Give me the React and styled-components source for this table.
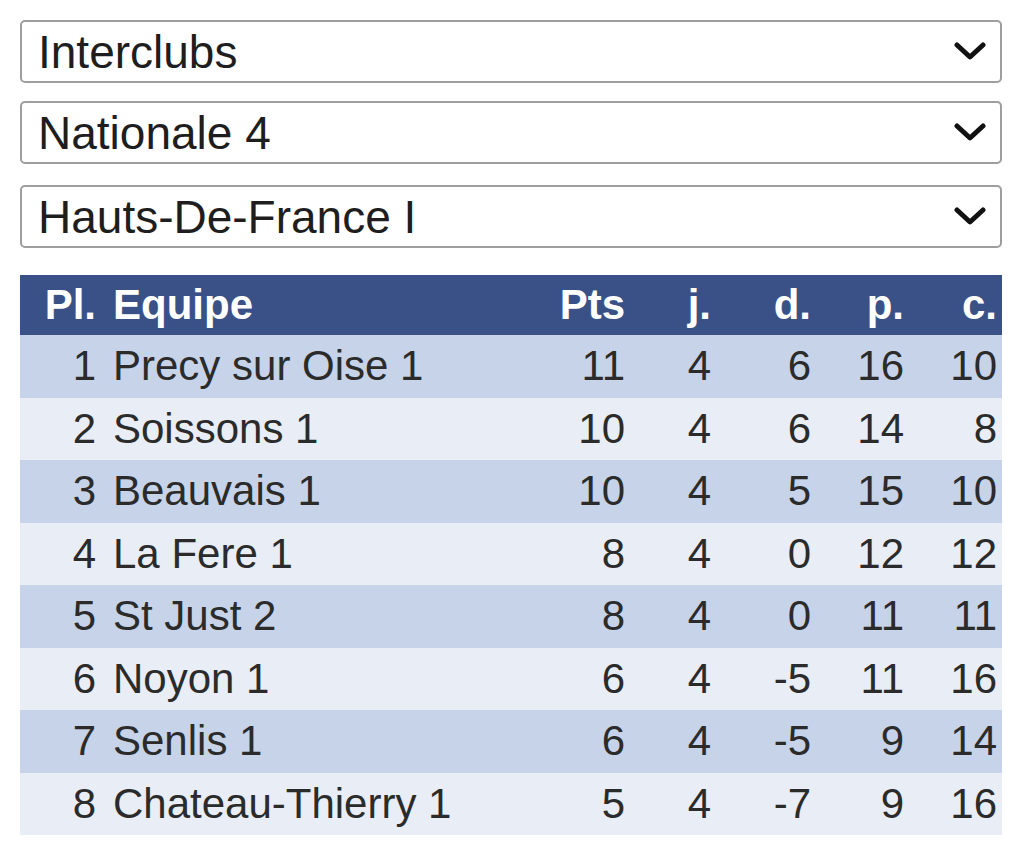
import styled, { createGlobalStyle } from 'styled-components';

const GlobalStyle = createGlobalStyle`
  body {
    margin: 0;
    background: #fff;
    font-family: "Liberation Sans", Arial, sans-serif;
  }
`

const Page = styled.div`
  padding: 20px 22px 20px 20px;
  width: 982px;
  display: flex;
  flex-direction: column;
`

const SelectWrap = styled.div`
  position: relative;
  height: 63px;
  margin-bottom: ${({gap})=>gap}px;
`

const Select = styled.select`
  appearance: none;
  -webkit-appearance: none;
  width: 100%;
  height: 100%;
  box-sizing: border-box;
  border: 2.5px solid #9e9e9e;
  border-radius: 5px;
  background: #fff;
  padding: 0 60px 0 16px;
  font-family: "Liberation Sans", Arial, sans-serif;
  font-size: 46px;
  color: #1e1e1e;
  outline: none;
`

const Chevron = styled.svg`
  position: absolute;
  right: 16px;
  top: 22px;
  width: 32px;
  height: 20px;
  pointer-events: none;
`

const Table = styled.table`
  width: 982px;
  table-layout: fixed;
  border-collapse: collapse;
  border-spacing: 0;
  font-family: "Liberation Sans", Arial, sans-serif;
`

const HeadRow = styled.tr`
  background: #3a5188;
  height: 60px;
`

const Th = styled.th`
  color: #fff;
  font-size: 42px;
  font-weight: bold;
  text-align: ${({left})=>left?'left':'right'};
  padding: ${({left})=>left?'0 0 0 13px':'0 5px 0 0'};
  vertical-align: middle;
  white-space: nowrap;
`

const Row = styled.tr`
  background: ${({alt})=>alt?'#e9edf6':'#c6d3e9'};
  height: 62.5px;
`

const Td = styled.td`
  color: #2b2b2b;
  font-size: 42px;
  text-align: ${({left})=>left?'left':'right'};
  padding: ${({left})=>left?'0 0 0 13px':'0 5px 0 0'};
  vertical-align: middle;
  white-space: nowrap;
`

const selects = [
  {value:'Interclubs', gap:18},
  {value:'Nationale 4', gap:21},
  {value:'Hauts-De-France I', gap:27},
]

const cols = [80, 450, 80, 86, 100, 93, 93]

const teams = [
  [1,'Precy sur Oise 1',11,4,6,16,10],
  [2,'Soissons 1',10,4,6,14,8],
  [3,'Beauvais 1',10,4,5,15,10],
  [4,'La Fere 1',8,4,0,12,12],
  [5,'St Just 2',8,4,0,11,11],
  [6,'Noyon 1',6,4,-5,11,16],
  [7,'Senlis 1',6,4,-5,9,14],
  [8,'Chateau-Thierry 1',5,4,-7,9,16],
]

const Dropdown = ({value,gap}) => {
  return (
    <SelectWrap gap={gap}>
      <Select defaultValue={value}>
        <option>{value}</option>
      </Select>
      <Chevron viewBox="0 0 32 20">
        <path d="M3 3 L16 15 L29 3" fill="none" stroke="#111" strokeWidth="5" strokeLinecap="round" strokeLinejoin="round"/>
      </Chevron>
    </SelectWrap>
  )
}

const App = () => {
  return (
    <Page>
      <GlobalStyle/>
      {selects.map((item,index)=>{
        return <Dropdown key={index} value={item.value} gap={item.gap}/>
      })}
      <Table>
        <colgroup>
          {cols.map((w,i)=> <col key={i} style={{width: w}}/>)}
        </colgroup>
        <thead>
          <HeadRow>
            <Th style={{paddingRight: 4}}>Pl.</Th>
            <Th left>Equipe</Th>
            <Th>Pts</Th>
            <Th>j.</Th>
            <Th>d.</Th>
            <Th>p.</Th>
            <Th>c.</Th>
          </HeadRow>
        </thead>
        <tbody>
          {teams.map((t,index)=>{
            return (
              <Row key={index} alt={index%2===1}>
                <Td style={{paddingRight: 4}}>{t[0]}</Td>
                <Td left>{t[1]}</Td>
                <Td>{t[2]}</Td>
                <Td>{t[3]}</Td>
                <Td>{t[4]}</Td>
                <Td>{t[5]}</Td>
                <Td>{t[6]}</Td>
              </Row>
            )
          })}
        </tbody>
      </Table>
    </Page>
  )
}

export default App
